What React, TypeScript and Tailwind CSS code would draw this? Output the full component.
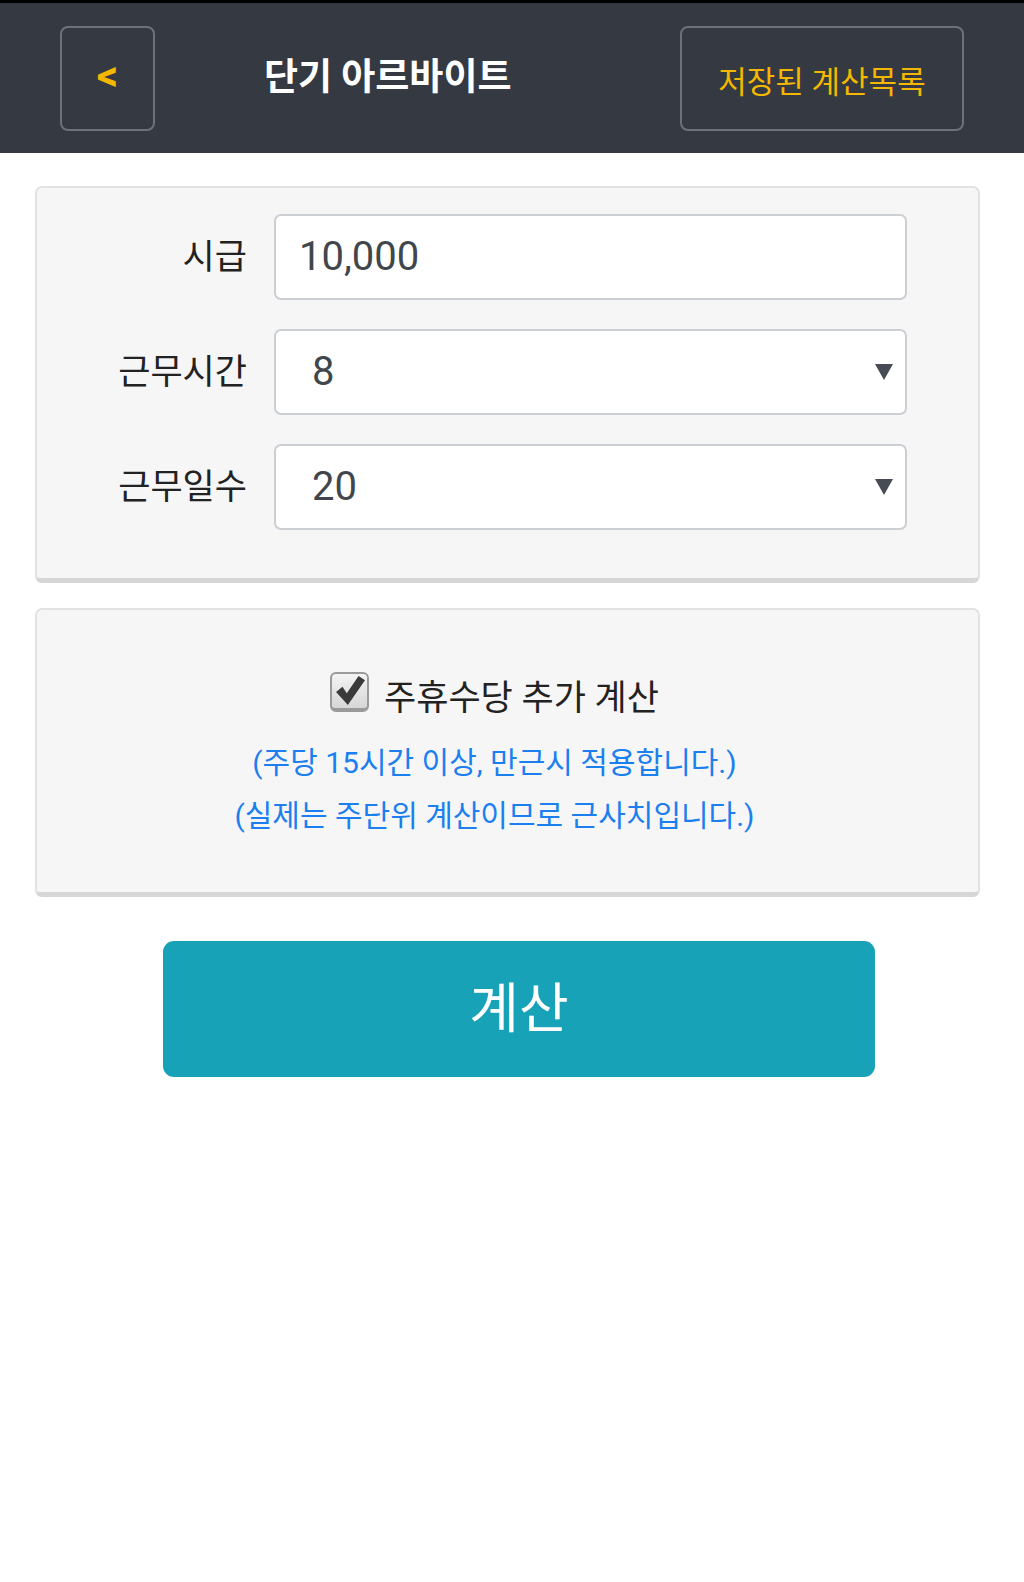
import React from "react";

const font = { fontFamily: "Roboto, 'Noto Sans CJK KR', sans-serif" };

function Arrow() {
  return (
    <svg width="18" height="16" viewBox="0 0 18 16">
      <path d="M0 0 H18 L9 16 Z" fill="#474c54" />
    </svg>
  );
}

function Field({ label, value, select }: { label: string; value: string; select?: boolean }) {
  return (
    <div className="flex items-center">
      <div className="w-[210px] text-right text-[35px] text-[#222] leading-none">{label}</div>
      <div
        className={
          "ml-[27px] flex h-[86px] w-[633px] items-center justify-between rounded-[7px] border-2 border-[#cbced3] bg-white pr-[12px] " +
          (select ? "pl-[36px]" : "pl-[23px]")
        }
      >
        <span className="text-[40px] text-[#41464d] leading-none">{value}</span>
        {select && <Arrow />}
      </div>
    </div>
  );
}

function CheckBox() {
  return (
    <div className="flex h-[40px] w-[39px] items-center justify-center rounded-[6px] border-2 border-[#9a9a9a] border-b-[4px] bg-gradient-to-b from-[#f4f4f4] to-[#d6d6d6]">
      <svg width="30" height="30" viewBox="0 0 28 28">
        <path d="M1 15 L7 10 L11 16 L22 0 L28 4 L12 27 Z" fill="#3a3a3a" />
      </svg>
    </div>
  );
}

export default function App() {
  return (
    <div className="min-h-[1582px] bg-white" style={font}>
      <header className="flex h-[153px] items-center border-t-[3px] border-black bg-[#353a42] pl-[60px] pr-[60px]">
        <button className="flex h-[105px] w-[95px] items-center justify-center rounded-[8px] border-2 border-[#6d7179] pb-[4px] text-[42px] font-bold text-[#f5b800] leading-none">
          &lt;
        </button>
        <h1 className="ml-[109px] -mt-[2px] text-[37px] font-semibold text-white leading-none">단기 아르바이트</h1>
        <button className="ml-auto flex h-[105px] w-[284px] items-center justify-center rounded-[8px] border-2 border-[#6d7179] pt-[8px] text-[31px] text-[#f5b800] leading-none">
          저장된 계산목록
        </button>
      </header>

      <section className="ml-[35px] mt-[33px] w-[945px] rounded-[7px] border-2 border-b-[5px] border-[#e2e2e2] border-b-[#d6d6d6] bg-[#f6f6f6] pt-[26px] pb-[48px]">
        <div className="flex flex-col gap-[29px]">
          <Field label="시급" value="10,000" />
          <Field label="근무시간" value="8" select />
          <Field label="근무일수" value="20" select />
        </div>
      </section>

      <section className="ml-[35px] mt-[25px] w-[945px] rounded-[7px] border-2 border-b-[5px] border-[#e2e2e2] border-b-[#d6d6d6] bg-[#f6f6f6] pt-[61px] pb-[50px] pr-[26px]">
        <div className="flex h-[41px] items-center justify-center">
          <CheckBox />
          <span className="ml-[15px] mt-[14px] text-[35px] text-[#222] leading-none">주휴수당 추가 계산</span>
        </div>
        <div className="mt-[24px] text-center text-[30px] leading-[53px] text-[#1b7ff0]">
          <p>(주당 15시간 이상, 만근시 적용합니다.)</p>
          <p>(실제는 주단위 계산이므로 근사치입니다.)</p>
        </div>
      </section>

      <button className="ml-[163px] mt-[44px] flex h-[136px] w-[712px] items-center justify-center rounded-[11px] bg-[#18a2b8] text-[54px] text-white">
        계산
      </button>
    </div>
  );
}
